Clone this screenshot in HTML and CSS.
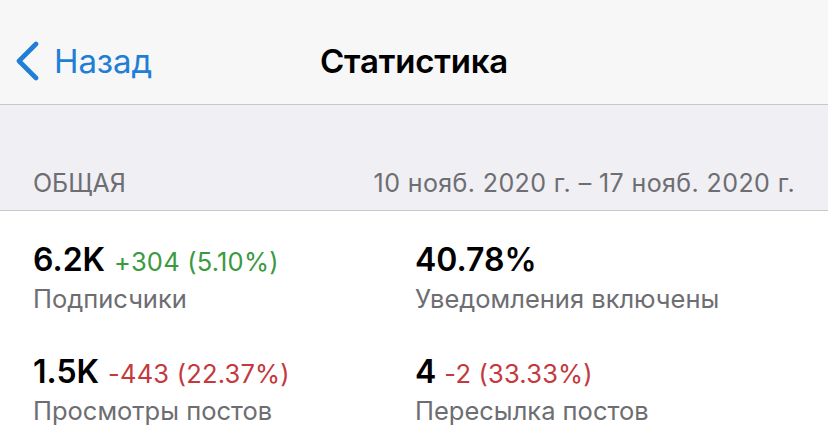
FILE: index.html
```html
<!DOCTYPE html>
<html lang="ru">
<head>
<meta charset="utf-8">
<title>Статистика</title>
<link rel="stylesheet" href="styles.css">
</head>
<body>
<header class="nav">
  <a class="back">
    <svg class="chev" width="26" height="40" viewBox="0 0 26 40"><path d="M22 3 L5 20 L22 37" fill="none" stroke="currentColor" stroke-width="4.6" stroke-linecap="round" stroke-linejoin="round"/></svg>
    <span class="back-text">Назад</span>
  </a>
  <h1 class="title">Статистика</h1>
  <span class="spacer"></span>
</header>
<section class="group-head">
  <span class="head-left">ОБЩАЯ</span>
  <span class="head-right">10 нояб. 2020 г. – 17 нояб. 2020 г.</span>
</section>
<main class="stats">
  <div class="stat">
    <div class="value-line"><span class="value">6.2K</span><span class="delta up">+304 (5.10%)</span></div>
    <div class="label">Подписчики</div>
  </div>
  <div class="stat">
    <div class="value-line"><span class="value">40.78%</span></div>
    <div class="label">Уведомления включены</div>
  </div>
  <div class="stat">
    <div class="value-line"><span class="value">1.5K</span><span class="delta down">-443 (22.37%)</span></div>
    <div class="label">Просмотры постов</div>
  </div>
  <div class="stat">
    <div class="value-line"><span class="value">4</span><span class="delta down narrow">-2 (33.33%)</span></div>
    <div class="label">Пересылка постов</div>
  </div>
</main>
</body>
</html>
```

FILE: styles.css
```css
* { box-sizing: border-box; }
html, body {
  margin: 0;
  padding: 0;
  background: #ffffff;
  font-family: "Inter", "Noto Sans", "Liberation Sans", sans-serif;
  width: 828px;
  height: 443px;
  overflow: hidden;
}
.nav {
  height: 105px;
  background: #f7f7f7;
  border-bottom: 1px solid #c8c8cc;
  display: grid;
  grid-template-columns: 1fr auto 1fr;
  align-items: center;
  padding-top: 17px;
}
.back {
  display: flex;
  align-items: center;
  color: #1f7ed6;
  padding-left: 14px;
  gap: 14px;
}
.chev { display: block; }
.back-text {
  font-size: 33px;
  letter-spacing: -0.1px;
}
.title {
  margin: 0;
  font-size: 33px;
  font-weight: 600;
  color: #000;
  letter-spacing: -0.2px;
}
.group-head {
  height: 106px;
  background: #efeff4;
  border-bottom: 1px solid #c8c8cc;
  display: flex;
  justify-content: space-between;
  align-items: flex-end;
  padding: 0 33px 11px 33px;
  color: #6d6d72;
  font-size: 25px;
  line-height: 32px;
}
.head-right {
  letter-spacing: 0.4px;
}
.stats {
  display: grid;
  grid-template-columns: 382px 1fr;
  padding: 29px 0 0 33px;
  row-gap: 35px;
}
.value-line {
  line-height: 40px;
  height: 40px;
  white-space: nowrap;
}
.value {
  font-size: 32px;
  font-weight: 600;
  color: #000;
}
.delta {
  font-size: 25.5px;
  margin-left: 9px;
  letter-spacing: 0.2px;
}
.delta.narrow { margin-left: 8px; }
.up { color: #3a9a41; }
.down { color: #c4393d; }
.label {
  font-size: 25.5px;
  line-height: 37px;
  color: #6d6d72;
}
```
